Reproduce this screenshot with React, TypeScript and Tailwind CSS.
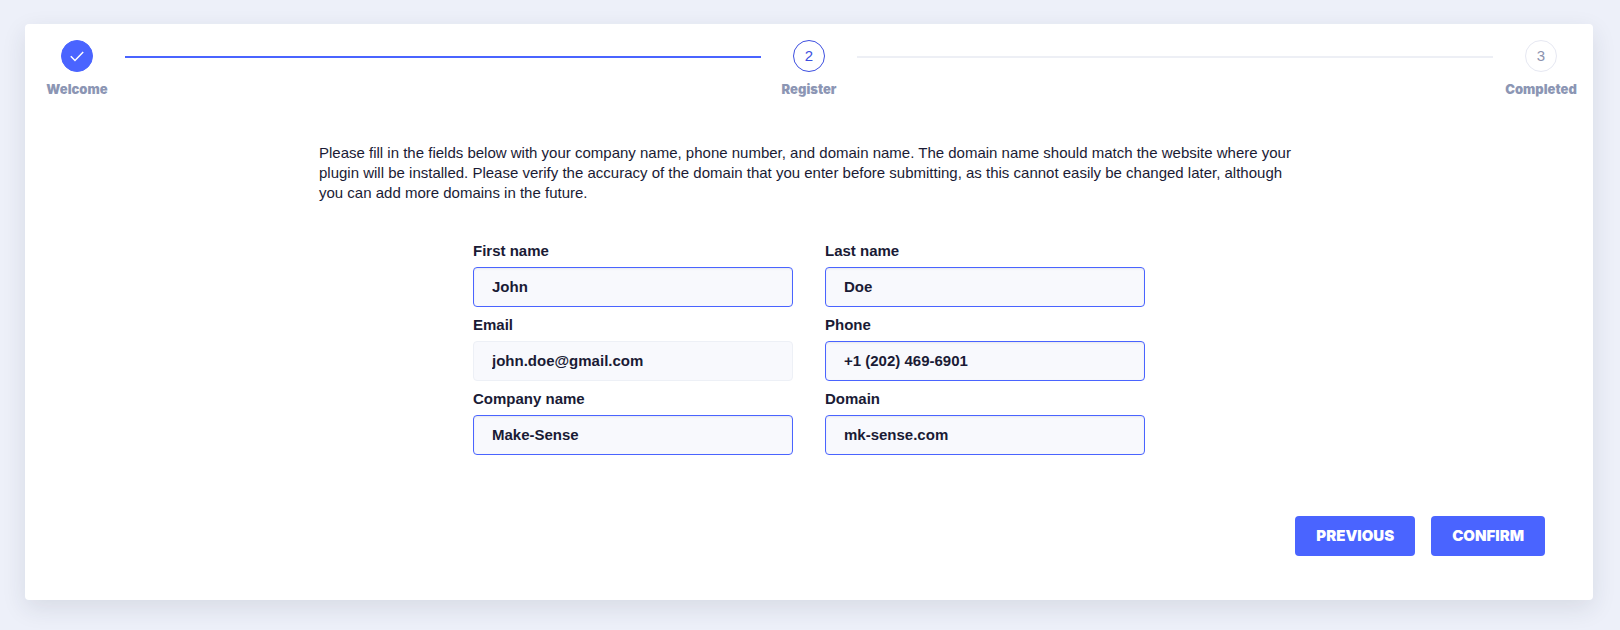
import { useState } from "react";
import clsx from "clsx";

type Step = { label: string; status: "done" | "active" | "pending" };

const steps: Step[] = [
	{ label: "Welcome", status: "done" },
	{ label: "Register", status: "active" },
	{ label: "Completed", status: "pending" },
];

const fields = [
	{ id: "firstName", label: "First name", type: "text" },
	{ id: "lastName", label: "Last name", type: "text" },
	{ id: "email", label: "Email", type: "email", readOnly: true },
	{ id: "phone", label: "Phone", type: "tel" },
	{ id: "company", label: "Company name", type: "text" },
	{ id: "domain", label: "Domain", type: "text" },
];

function StepCircle({ step, index }: { step: Step; index: number }) {
	return (
		<span
			className={clsx(
				"flex h-8 w-8 items-center justify-center rounded-full border text-[15px]",
				step.status === "done" && "border-[#4a64ff] bg-[#4a64ff] text-white",
				step.status === "active" && "border-[#3d4fe0] text-[#3d4fe0]",
				step.status === "pending" && "border-[#e6e8f2] text-[#8c93af]",
			)}
		>
			{step.status === "done" ? (
				<svg viewBox="0 0 14 11" className="h-[11px] w-[14px]" fill="none" aria-hidden="true">
					<path d="M0.8 5.2L5 9.5L13.2 1" stroke="currentColor" strokeWidth="1.5" />
				</svg>
			) : (
				index + 1
			)}
		</span>
	);
}

function Stepper() {
	return (
		<ol className="flex px-9 pt-4">
			{steps.map((step, i) => (
				<li key={step.label} className={clsx("flex", i > 0 && "flex-1")}>
					{i > 0 && (
						<span
							className={clsx(
								"mx-8 mt-4 h-0.5 flex-1",
								step.status === "pending" ? "bg-[#edeff5]" : "bg-[#4a64ff]",
							)}
						/>
					)}
					<div className="flex w-8 flex-col items-center gap-2">
						<StepCircle step={step} index={i} />
						<span className="whitespace-nowrap font-['Inter',sans-serif] text-[13px] leading-[18px] font-black text-[#8c96b4]">
							{step.label}
						</span>
					</div>
				</li>
			))}
		</ol>
	);
}

export default function App() {
	const [values, setValues] = useState<Record<string, string>>({
		firstName: "John",
		lastName: "Doe",
		email: "john.doe@gmail.com",
		phone: "+1 (202) 469-6901",
		company: "Make-Sense",
		domain: "mk-sense.com",
	});

	return (
		<main className="min-h-screen bg-[#edf0f9] pt-6 pr-[27px] pb-[30px] pl-[25px] font-['Liberation_Sans',Arial,sans-serif] text-[15px] leading-5 text-[#1a1b35]">
			<section className="rounded bg-white shadow-[0_8px_24px_rgba(40,50,60,0.11)]">
				<Stepper />

				<form onSubmit={(e) => e.preventDefault()}>
					<p className="mx-auto mt-[45px] w-5/8">
						Please fill in the fields below with your company name, phone number, and domain
						name. The domain name should match the website where your plugin will be
						installed. Please verify the accuracy of the domain that you enter before
						submitting, as this cannot easily be changed later, although you can add more
						domains in the future.
					</p>

					<div className="mx-auto mt-[38px] grid max-w-2xl grid-cols-2 gap-x-8 gap-y-2">
						{fields.map((field) => (
							<div key={field.id} className="flex flex-col gap-1.5">
								<label htmlFor={field.id} className="font-bold">
									{field.label}
								</label>
								<input
									id={field.id}
									type={field.type}
									readOnly={field.readOnly}
									value={values[field.id]}
									onChange={(e) => setValues({ ...values, [field.id]: e.target.value })}
									className={clsx(
										"h-10 w-full rounded border bg-[#f8f9fd] px-[18px] pb-0.5 font-bold outline-none",
										field.readOnly
											? "border-[#edf0f6]"
											: "border-[#4a64ff] shadow-[inset_0_1px_2px_rgba(26,27,53,0.08)]",
									)}
								/>
							</div>
						))}
					</div>

					<div className="mt-[61px] flex justify-end gap-4 pr-12 pb-11 font-['Inter',sans-serif] font-black text-white">
						<button type="button" className="h-10 cursor-pointer rounded bg-[#4a64ff] px-[21px]">
							PREVIOUS
						</button>
						<button type="submit" className="h-10 cursor-pointer rounded bg-[#4a64ff] px-[21px]">
							CONFIRM
						</button>
					</div>
				</form>
			</section>
		</main>
	);
}
